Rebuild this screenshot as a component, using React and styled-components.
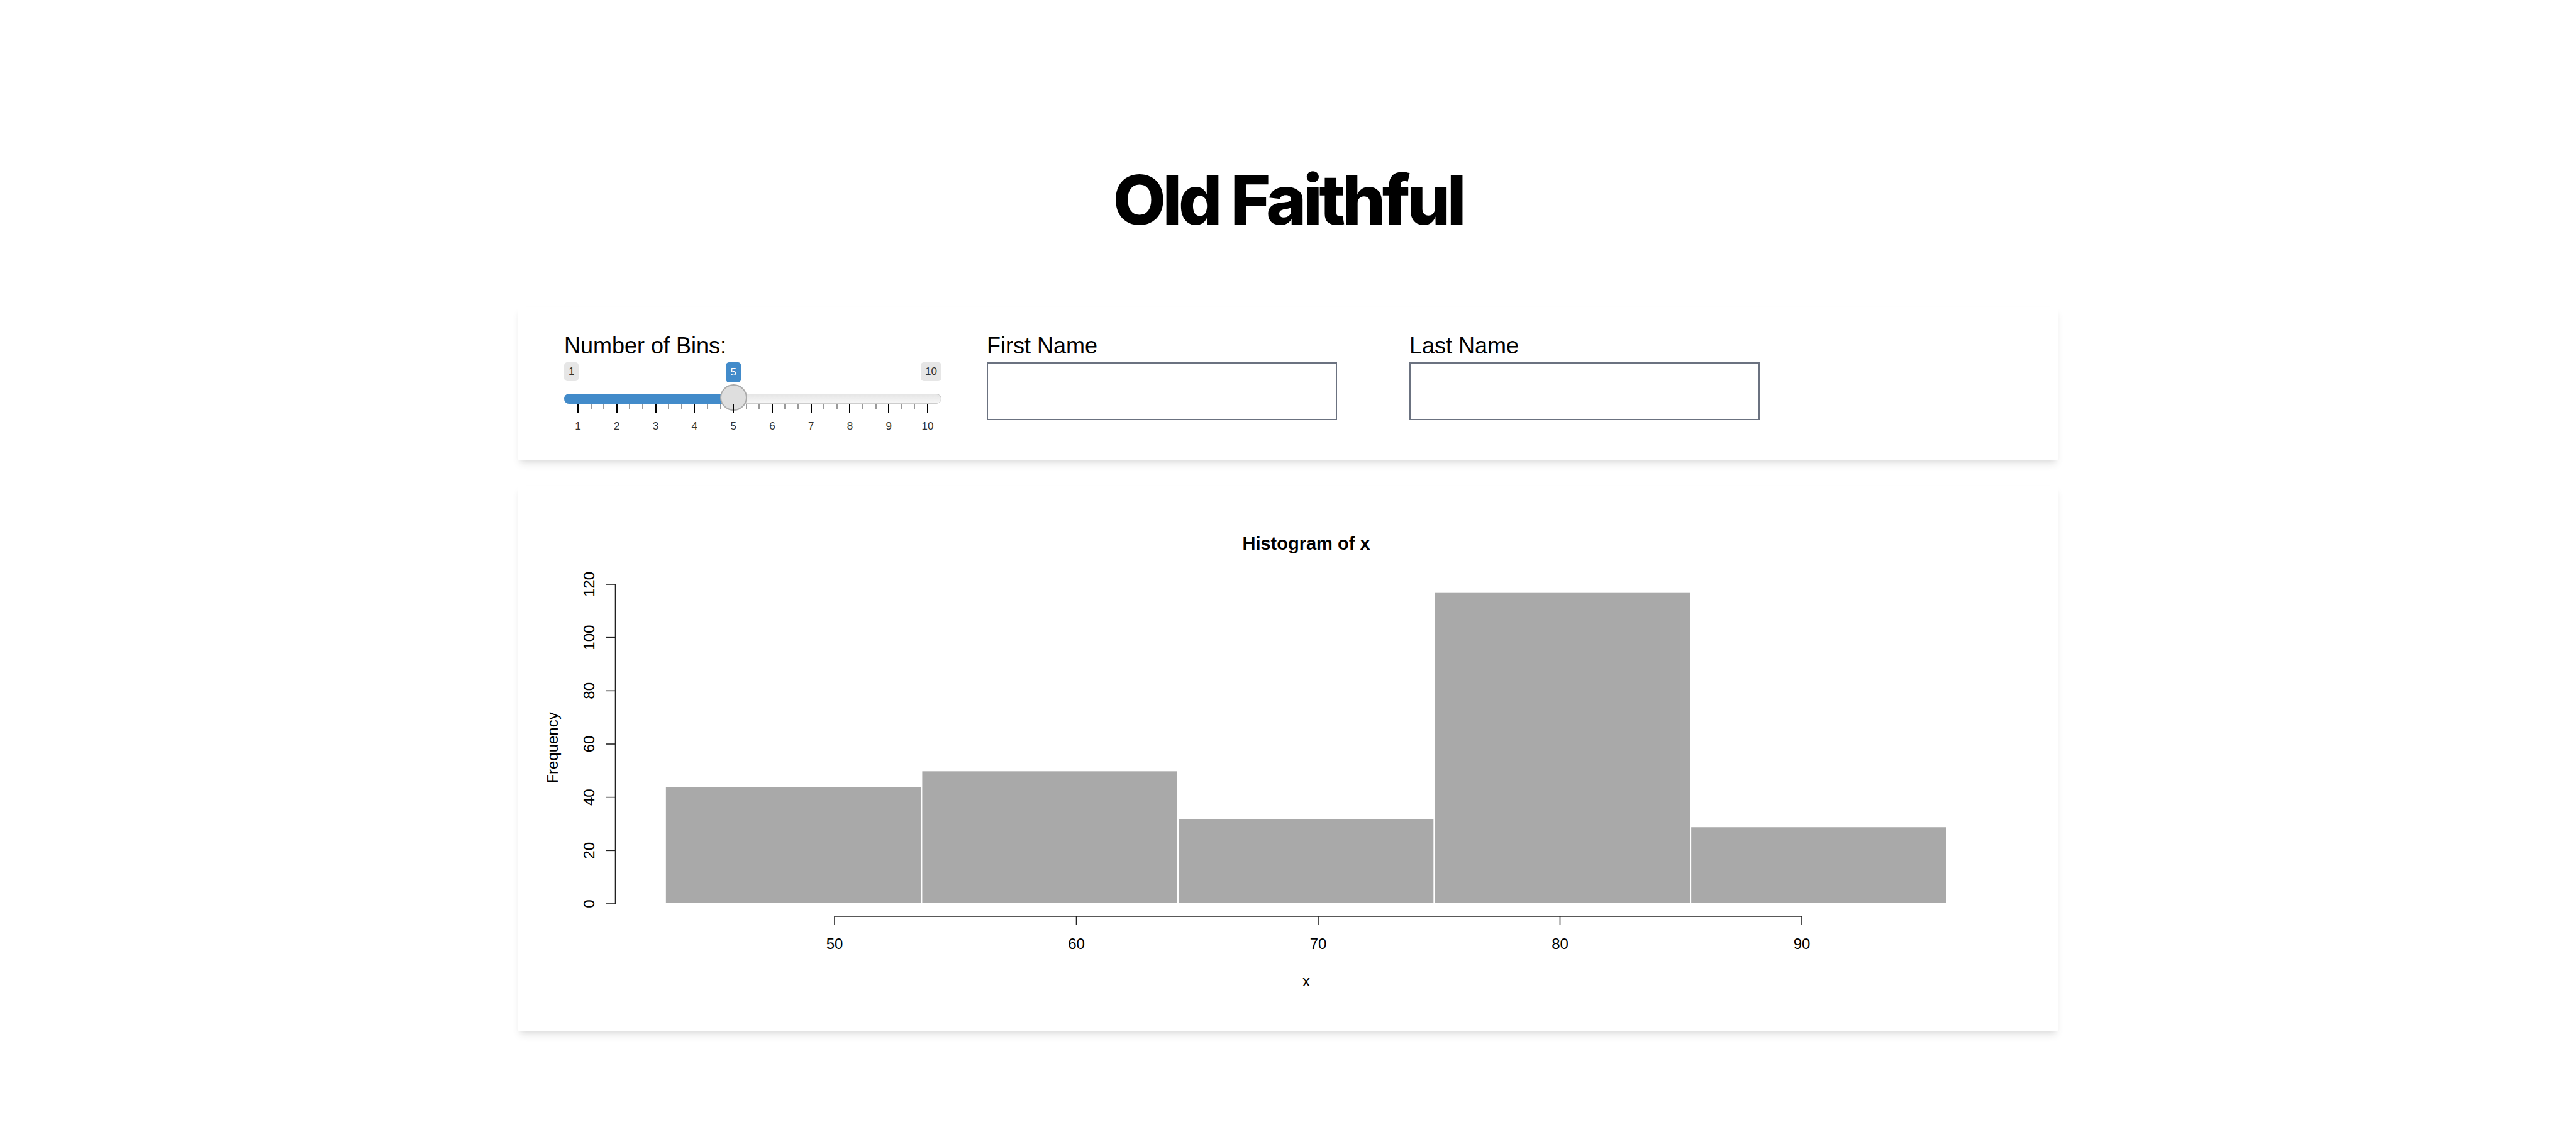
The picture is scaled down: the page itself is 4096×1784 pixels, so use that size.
import React from 'react'
import styled, { createGlobalStyle } from 'styled-components'

const MIN = 1
const MAX = 10
const VALUE = 5
const SLIDER_W = 600
const EDGE = 22

// value -> px inside the slider
const pos = (v) => EDGE + ((v - MIN) / (MAX - MIN)) * (SLIDER_W - EDGE * 2)

// histogram data (faithful$waiting, 5 bins)
const breaks = [43, 53.6, 64.2, 74.8, 85.4, 96]
const counts = [44, 50, 32, 117, 29]

const X0 = 463
const XS = 38.45
const Y0 = 625
const YS = 4.2333
const px = (v) => X0 + (v - 50) * XS
const py = (v) => Y0 - v * YS

const GlobalStyle = createGlobalStyle`
  html, body {
    margin: 0;
    padding: 0;
    background: #ffffff;
  }
  body {
    font-family: "Liberation Sans", Arial, sans-serif;
    color: #000;
  }
  * {
    box-sizing: border-box;
  }
`

const Page = styled.div`
  display: flex;
  flex-direction: column;
  align-items: center;
  padding-top: 263px;
  padding-bottom: 120px;
`

const Title = styled.h1`
  margin: 0;
  font-family: Inter, "Noto Sans", sans-serif;
  font-weight: 800;
  font-size: 109px;
  line-height: 1;
  letter-spacing: -0.05em;
  color: #000;
`

const Main = styled.main`
  width: 2448px;
  margin-top: 116px;
  display: flex;
  flex-direction: column;
  gap: 40px;
`

const Card = styled.section`
  background: #fff;
  border-radius: 2px;
  box-shadow: 0 8px 12px -2px rgba(0, 0, 0, 0.09), 0 4px 8px -4px rgba(0, 0, 0, 0.08);
`

const ControlsCard = styled(Card)`
  display: grid;
  grid-template-columns: repeat(3, 672px);
  padding: 41px 73px 44px;
`

const ChartCard = styled(Card)`
  padding: 40px;
`

const Field = styled.div`
  display: flex;
  flex-direction: column;
  align-items: flex-start;
`

const Label = styled.label`
  font-size: 36px;
  line-height: 41px;
  color: #000;
  margin-bottom: 6px;
`

const TextInput = styled.input`
  width: 557px;
  height: 92px;
  border: 2px solid #6b7280;
  border-radius: 0;
  background: #fff;
  padding: 0 16px;
  font-size: 32px;
  font-family: inherit;
  outline: none;
`

const Slider = styled.div`
  width: ${SLIDER_W}px;
  height: 112px;
  display: flex;
  flex-direction: column;
`

const BadgeRow = styled.div`
  position: relative;
  height: 32px;
`

const Badge = styled.span`
  position: absolute;
  top: 0;
  height: ${(p) => (p.$active ? 32 : 30)}px;
  line-height: ${(p) => (p.$active ? 32 : 30)}px;
  padding: 0 7px;
  border-radius: 5px;
  font-size: 17px;
  color: ${(p) => (p.$active ? '#fff' : '#333')};
  background: ${(p) => (p.$active ? '#428bca' : '#e6e6e6')};
  white-space: nowrap;
`

const Rail = styled.div`
  position: relative;
  height: 42px;
  margin-top: 3px;
`

const Track = styled.div`
  position: relative;
  margin-top: 15px;
  height: 16px;
  border-radius: 8px;
  border: 1px solid #cccccc;
  background: linear-gradient(to bottom, #dddddd -50%, #ffffff 150%);
`

const Fill = styled.div`
  position: absolute;
  left: -1px;
  top: -1px;
  bottom: -1px;
  border-radius: 8px 0 0 8px;
  background: #428bca;
`

const Handle = styled.div`
  position: absolute;
  top: 0;
  width: 43px;
  height: 42px;
  border-radius: 50%;
  background: #dedede;
  border: 2px solid #aaaaaa;
`

const Grid = styled.div`
  position: relative;
  height: 46px;
  margin-top: -11px;
`

const Tick = styled.span`
  position: absolute;
  top: 0;
  width: 2px;
  margin-left: -1px;
  height: ${(p) => (p.$major ? 15 : 8)}px;
  background: ${(p) => (p.$major ? '#000' : '#999')};
`

const TickLabel = styled.span`
  position: absolute;
  top: 26px;
  transform: translateX(-50%);
  font-size: 17px;
  line-height: 20px;
  color: #333;
`

const Chart = styled.svg`
  display: block;
  font-family: "Liberation Sans", Arial, sans-serif;
`

const RangeSlider = () => {
  const values = []
  for (let v = MIN; v <= MAX; v++) values.push(v)
  const step = (SLIDER_W - EDGE * 2) / (MAX - MIN)
  const minors = []
  values.slice(0, -1).forEach((v) => {
    minors.push(pos(v) + step / 3, pos(v) + (step * 2) / 3)
  })
  const handleX = pos(VALUE)

  return (
    <Slider>
      <BadgeRow>
        <Badge style={{ left: 0 }}>{MIN}</Badge>
        <Badge $active style={{ left: handleX, transform: 'translateX(-50%)' }}>{VALUE}</Badge>
        <Badge style={{ right: 0 }}>{MAX}</Badge>
      </BadgeRow>
      <Rail>
        <Track>
          <Fill style={{ width: handleX }} />
        </Track>
        <Handle style={{ left: handleX - 21.5 }} />
      </Rail>
      <Grid>
        {minors.map((x, i) => (
          <Tick key={'m' + i} style={{ left: x }} />
        ))}
        {values.map((v) => (
          <Tick key={'t' + v} $major style={{ left: pos(v) }} />
        ))}
        {values.map((v) => (
          <TickLabel key={'l' + v} style={{ left: pos(v) }}>{v}</TickLabel>
        ))}
      </Grid>
    </Slider>
  )
}

const Histogram = () => (
  <Chart width="2368" height="788" viewBox="0 0 2368 788">
    <text x="1213" y="62" textAnchor="middle" fontSize="29" fontWeight="bold" fill="#000">
      Histogram of x
    </text>
    {counts.map((c, i) => (
      <rect
        key={i}
        x={px(breaks[i])}
        y={py(c)}
        width={px(breaks[i + 1]) - px(breaks[i])}
        height={c * YS}
        fill="#a9a9a9"
        stroke="#ffffff"
        strokeWidth="2"
      />
    ))}
    <g stroke="#222" strokeWidth="1.6" fill="none">
      <line x1={px(50)} y1="645" x2={px(90)} y2="645" />
      {[50, 60, 70, 80, 90].map((v) => (
        <line key={v} x1={px(v)} y1="645" x2={px(v)} y2="659" />
      ))}
      <line x1="114.5" y1={py(0)} x2="114.5" y2={py(120)} />
      {[0, 20, 40, 60, 80, 100, 120].map((v) => (
        <line key={v} x1="99" y1={py(v)} x2="114.5" y2={py(v)} />
      ))}
    </g>
    <g fontSize="24" fill="#000" textAnchor="middle">
      {[50, 60, 70, 80, 90].map((v) => (
        <text key={v} x={px(v)} y="697">{v}</text>
      ))}
      {[0, 20, 40, 60, 80, 100, 120].map((v) => (
        <text key={v} x="80.6" y={py(v)} transform={`rotate(-90 80.6 ${py(v)})`}>{v}</text>
      ))}
      <text x="1213" y="756">x</text>
      <text x="23" y="377" transform="rotate(-90 23 377)">Frequency</text>
    </g>
  </Chart>
)

const App = () => (
  <>
    <GlobalStyle />
    <Page>
      <Title>Old Faithful</Title>
      <Main>
        <ControlsCard>
          <Field>
            <Label>Number of Bins:</Label>
            <RangeSlider />
          </Field>
          <Field>
            <Label htmlFor="first">First Name</Label>
            <TextInput id="first" type="text" />
          </Field>
          <Field>
            <Label htmlFor="last">Last Name</Label>
            <TextInput id="last" type="text" />
          </Field>
        </ControlsCard>
        <ChartCard>
          <Histogram />
        </ChartCard>
      </Main>
    </Page>
  </>
)

export default App
